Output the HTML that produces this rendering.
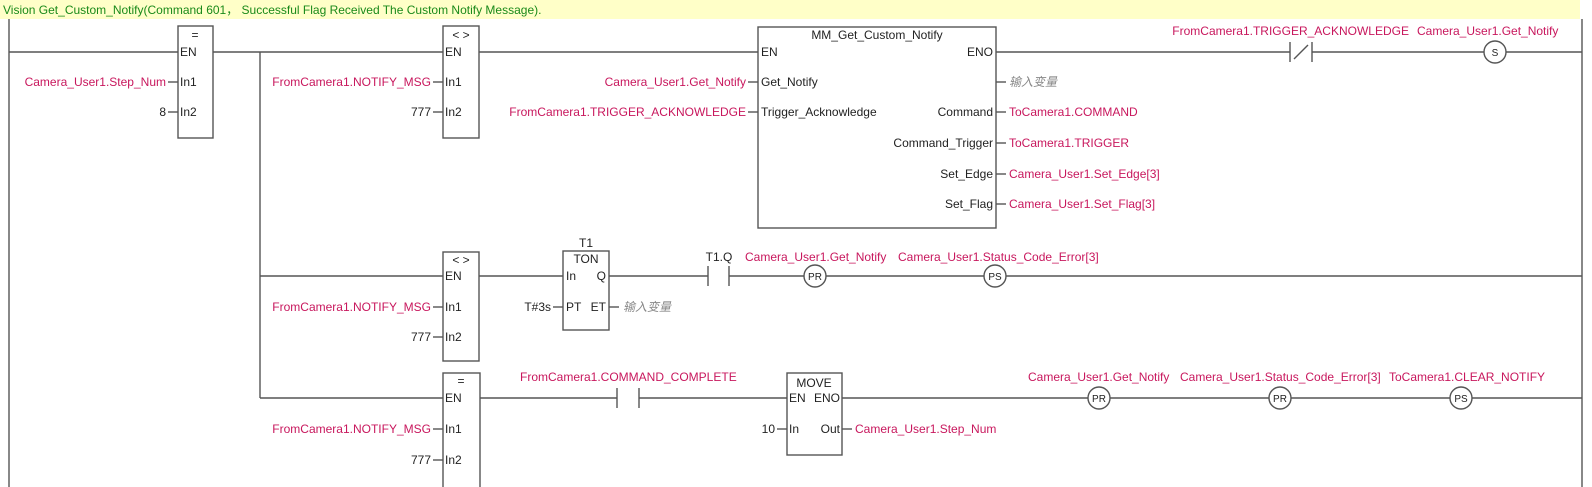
<!DOCTYPE html>
<html><head><meta charset="utf-8"><style>
html,body{margin:0;padding:0;background:#fff;width:1592px;height:487px;overflow:hidden}
svg{display:block}
text{font-family:"Liberation Sans","Noto Sans CJK SC",sans-serif;font-size:12px;fill:#222}
.r{fill:#c8175d}
.g{fill:#888;font-style:italic}
.e{text-anchor:end}
.m{text-anchor:middle}
line,rect,circle,path{stroke:#555;stroke-width:1.4;fill:none}
rect{fill:#fff}
circle{fill:#fff}
</style></head><body>
<svg width="1592" height="487" xmlns="http://www.w3.org/2000/svg">
<rect x="0" y="0" width="1580" height="19" style="fill:#ffffc8;stroke:none"/>
<text x="3" y="14" style="fill:#1a8a1a">Vision Get_Custom_Notify(Command 601， Successful Flag Received The Custom Notify Message).</text>
<line x1="9" y1="19" x2="9" y2="487"/>
<line x1="1582" y1="19" x2="1582" y2="487"/>

<!-- rung 1 -->
<line x1="9" y1="52" x2="178" y2="52"/>
<line x1="213" y1="52" x2="443" y2="52"/>
<line x1="479" y1="52" x2="758" y2="52"/>
<line x1="996" y1="52" x2="1290" y2="52"/>
<line x1="1290" y1="42" x2="1290" y2="62"/><line x1="1312" y1="42" x2="1312" y2="62"/>
<line x1="1294" y1="59" x2="1308" y2="45"/>
<line x1="1312" y1="52" x2="1484" y2="52"/>
<circle cx="1495" cy="52" r="11"/>
<text x="1495" y="56" class="m" style="font-size:10px">S</text>
<line x1="1506" y1="52" x2="1582" y2="52"/>
<text x="1409" y="35" class="r e">FromCamera1.TRIGGER_ACKNOWLEDGE</text>
<text x="1417" y="35" class="r">Camera_User1.Get_Notify</text>

<line x1="260" y1="52" x2="260" y2="398"/>

<rect x="178" y="26" width="35" height="112"/>
<text x="195" y="39" class="m">=</text>
<text x="180" y="56">EN</text>
<text x="180" y="86">In1</text>
<text x="180" y="116">In2</text>
<line x1="168" y1="82" x2="178" y2="82"/><line x1="168" y1="112" x2="178" y2="112"/>
<text x="166" y="86" class="r e">Camera_User1.Step_Num</text>
<text x="166" y="116" class="e">8</text>

<rect x="443" y="26" width="36" height="112"/>
<text x="461" y="39" class="m">&lt; &gt;</text>
<text x="445" y="56">EN</text>
<text x="445" y="86">In1</text>
<text x="445" y="116">In2</text>
<line x1="433" y1="82" x2="443" y2="82"/><line x1="433" y1="112" x2="443" y2="112"/>
<text x="431" y="86" class="r e">FromCamera1.NOTIFY_MSG</text>
<text x="431" y="116" class="e">777</text>

<rect x="758" y="27" width="238" height="201"/>
<text x="877" y="39" class="m">MM_Get_Custom_Notify</text>
<text x="761" y="56">EN</text>
<text x="993" y="56" class="e">ENO</text>
<text x="761" y="86">Get_Notify</text>
<text x="761" y="116">Trigger_Acknowledge</text>
<text x="993" y="116" class="e">Command</text>
<text x="993" y="147" class="e">Command_Trigger</text>
<text x="993" y="178" class="e">Set_Edge</text>
<text x="993" y="208" class="e">Set_Flag</text>
<line x1="748" y1="82" x2="758" y2="82"/><line x1="748" y1="112" x2="758" y2="112"/>
<text x="746" y="86" class="r e">Camera_User1.Get_Notify</text>
<text x="746" y="116" class="r e">FromCamera1.TRIGGER_ACKNOWLEDGE</text>
<line x1="996" y1="82" x2="1006" y2="82"/><line x1="996" y1="112" x2="1006" y2="112"/>
<line x1="996" y1="143" x2="1006" y2="143"/><line x1="996" y1="174" x2="1006" y2="174"/><line x1="996" y1="204" x2="1006" y2="204"/>
<text x="1009" y="86" class="g">输入变量</text>
<text x="1009" y="116" class="r">ToCamera1.COMMAND</text>
<text x="1009" y="147" class="r">ToCamera1.TRIGGER</text>
<text x="1009" y="178" class="r">Camera_User1.Set_Edge[3]</text>
<text x="1009" y="208" class="r">Camera_User1.Set_Flag[3]</text>

<!-- rung 2 -->
<line x1="260" y1="276" x2="443" y2="276"/>
<rect x="443" y="252" width="36" height="109"/>
<text x="461" y="264" class="m">&lt; &gt;</text>
<text x="445" y="280">EN</text>
<text x="445" y="311">In1</text>
<text x="445" y="341">In2</text>
<line x1="433" y1="307" x2="443" y2="307"/><line x1="433" y1="337" x2="443" y2="337"/>
<text x="431" y="311" class="r e">FromCamera1.NOTIFY_MSG</text>
<text x="431" y="341" class="e">777</text>
<line x1="479" y1="276" x2="563" y2="276"/>
<rect x="563" y="251" width="46" height="79"/>
<text x="586" y="247" class="m">T1</text>
<text x="586" y="263" class="m">TON</text>
<text x="566" y="280">In</text>
<text x="606" y="280" class="e">Q</text>
<text x="566" y="311">PT</text>
<text x="606" y="311" class="e">ET</text>
<line x1="553" y1="307" x2="563" y2="307"/><line x1="609" y1="307" x2="619" y2="307"/>
<text x="551" y="311" class="e">T#3s</text>
<text x="623" y="311" class="g">输入变量</text>
<line x1="609" y1="276" x2="708" y2="276"/>
<line x1="708" y1="266" x2="708" y2="286"/><line x1="729" y1="266" x2="729" y2="286"/>
<text x="719" y="261" class="m">T1.Q</text>
<line x1="729" y1="276" x2="804" y2="276"/>
<circle cx="815" cy="276" r="11"/>
<text x="815" y="280" class="m" style="font-size:10px">PR</text>
<line x1="826" y1="276" x2="984" y2="276"/>
<circle cx="995" cy="276" r="11"/>
<text x="995" y="280" class="m" style="font-size:10px">PS</text>
<line x1="1006" y1="276" x2="1582" y2="276"/>
<text x="745" y="261" class="r">Camera_User1.Get_Notify</text>
<text x="898" y="261" class="r">Camera_User1.Status_Code_Error[3]</text>

<!-- rung 3 -->
<line x1="260" y1="398" x2="443" y2="398"/>
<rect x="443" y="373" width="37" height="120"/>
<text x="461" y="385" class="m">=</text>
<text x="445" y="402">EN</text>
<text x="445" y="433">In1</text>
<text x="445" y="464">In2</text>
<line x1="433" y1="429" x2="443" y2="429"/><line x1="433" y1="460" x2="443" y2="460"/>
<text x="431" y="433" class="r e">FromCamera1.NOTIFY_MSG</text>
<text x="431" y="464" class="e">777</text>
<line x1="480" y1="398" x2="617" y2="398"/>
<line x1="617" y1="388" x2="617" y2="408"/><line x1="639" y1="388" x2="639" y2="408"/>
<text x="520" y="381" class="r">FromCamera1.COMMAND_COMPLETE</text>
<line x1="639" y1="398" x2="787" y2="398"/>
<rect x="787" y="373" width="55" height="82"/>
<text x="814" y="387" class="m">MOVE</text>
<text x="789" y="402">EN</text>
<text x="840" y="402" class="e">ENO</text>
<text x="789" y="433">In</text>
<text x="840" y="433" class="e">Out</text>
<line x1="777" y1="429" x2="787" y2="429"/><line x1="842" y1="429" x2="852" y2="429"/>
<text x="775" y="433" class="e">10</text>
<text x="855" y="433" class="r">Camera_User1.Step_Num</text>
<line x1="842" y1="398" x2="1088" y2="398"/>
<circle cx="1099" cy="398" r="11"/>
<text x="1099" y="402" class="m" style="font-size:10px">PR</text>
<line x1="1110" y1="398" x2="1269" y2="398"/>
<circle cx="1280" cy="398" r="11"/>
<text x="1280" y="402" class="m" style="font-size:10px">PR</text>
<line x1="1291" y1="398" x2="1450" y2="398"/>
<circle cx="1461" cy="398" r="11"/>
<text x="1461" y="402" class="m" style="font-size:10px">PS</text>
<line x1="1472" y1="398" x2="1582" y2="398"/>
<text x="1028" y="381" class="r">Camera_User1.Get_Notify</text>
<text x="1180" y="381" class="r">Camera_User1.Status_Code_Error[3]</text>
<text x="1389" y="381" class="r">ToCamera1.CLEAR_NOTIFY</text>
</svg>
</body></html>
